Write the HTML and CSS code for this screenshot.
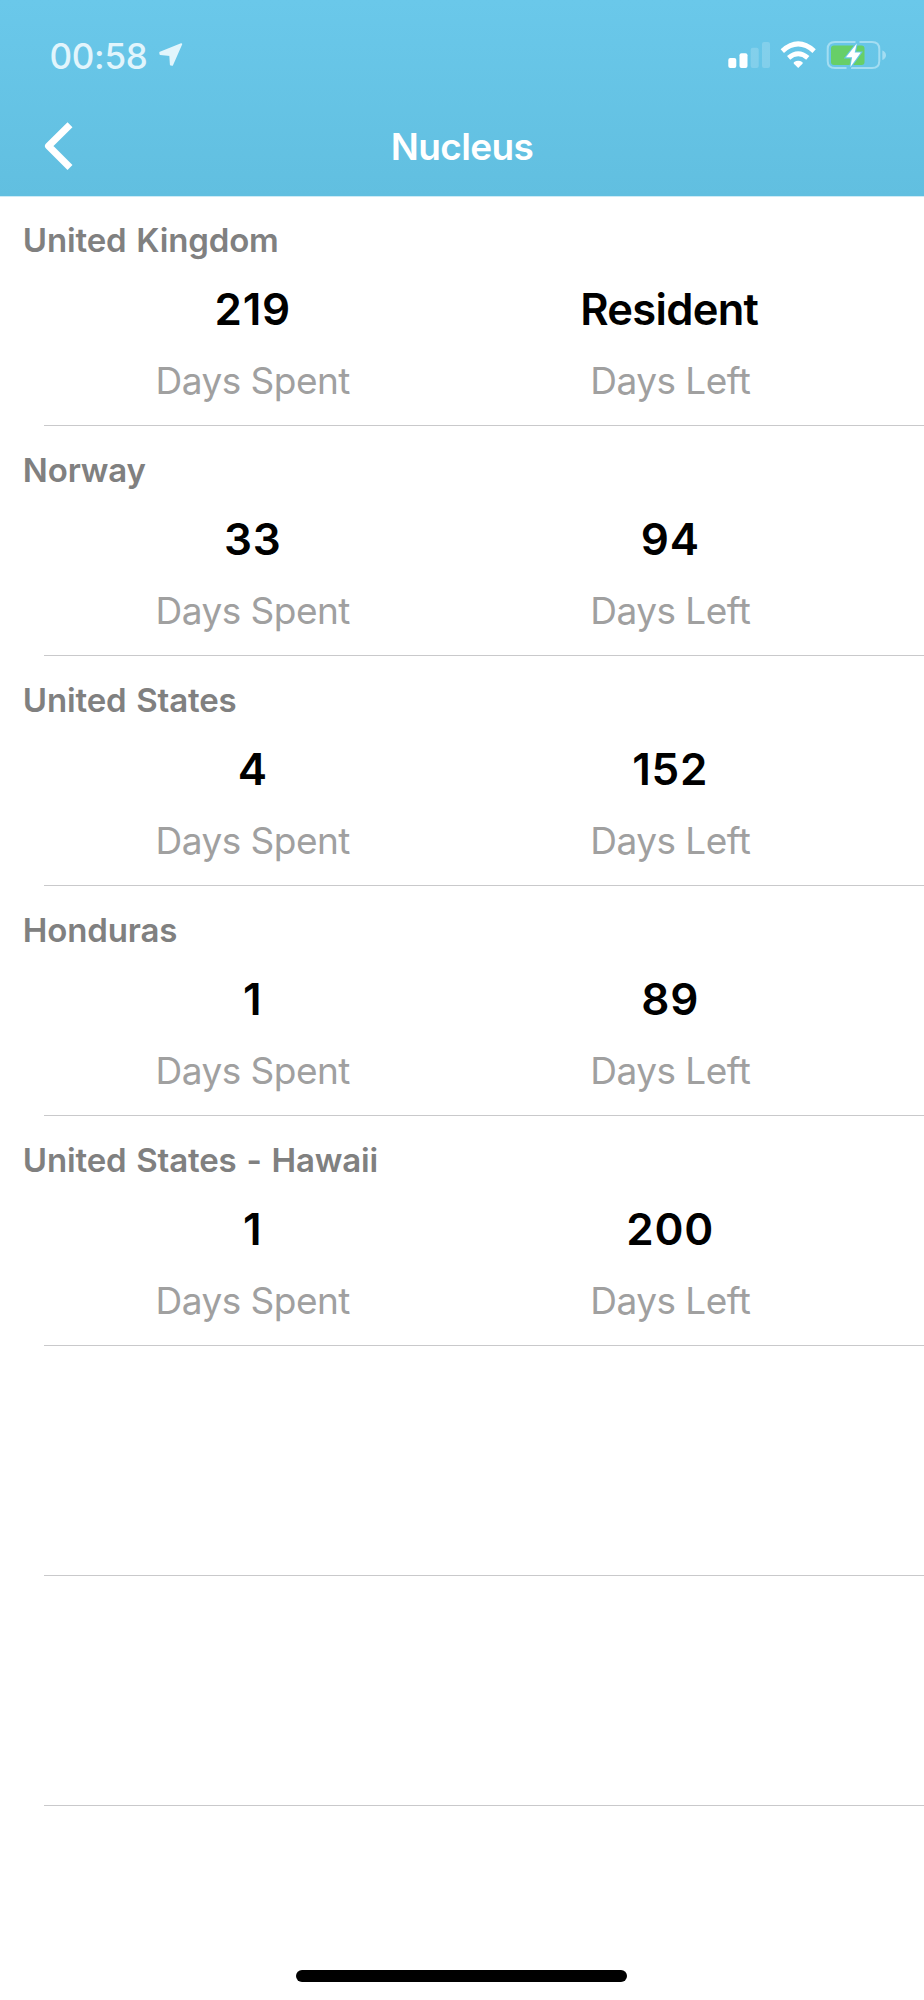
FILE: index.html
```
<!DOCTYPE html>
<html lang="en">
<head>
<meta charset="utf-8">
<title>Nucleus</title>
<link rel="stylesheet" href="styles.css">
</head>
<body>
<div class="screen">
  <header class="header">
    <div class="status">
      <div class="clock">
        <span class="time">00:58</span>
        <svg class="location" width="26" height="26" viewBox="0 0 26 26"><path d="M23.3 2.2 14.2 22.8 12.8 22.6 12.2 13.2 2.4 12.1 2.2 10.7Z" fill="#e2f5fc" stroke="#e2f5fc" stroke-width="1.8" stroke-linejoin="round"/></svg>
      </div>
      <svg class="indicators" width="162" height="32" viewBox="726 39 162 32">
        <g fill="#fff">
          <rect x="728.3" y="58" width="8" height="10" rx="2"/>
          <rect x="739.5" y="53.2" width="8" height="14.8" rx="2"/>
          <rect x="750.7" y="47.7" width="8" height="20.3" rx="2" opacity=".18"/>
          <rect x="762" y="42" width="8" height="26" rx="2" opacity=".18"/>
        </g>
        <path d="M798.2 68 793.9 63.7Q793.2 62.8 794.2 62.1 798.2 59.4 802.2 62.1 803.2 62.8 802.5 63.7Z" fill="#fff"/>
        <path d="M788.6 57.8Q798.2 49.6 807.8 57.8" fill="none" stroke="#fff" stroke-width="4.9"/>
        <path d="M782.3 51.1Q798.2 36.8 814.1 51.1" fill="none" stroke="#fff" stroke-width="5"/>
        <g fill="none" stroke="#a3ddf2" stroke-width="2">
          <path d="M855.5 42H835Q827.7 42 827.7 49V61Q827.7 68 835 68H846.5"/>
          <path d="M859.5 42H872Q879.3 42 879.3 49V61Q879.3 68 872 68H851"/>
        </g>
        <path d="M882.3 50.5Q886 52 886 55.2T882.3 60Z" fill="#a3ddf2"/>
        <rect x="831" y="45.5" width="33.5" height="19.5" rx="3" fill="#67cf68"/>
        <path d="M856.8 43.5 846 57.3H852.1L850.4 67 860.8 52.5H854.7Z" fill="#fff" stroke="#68c6e8" stroke-width="2.2" paint-order="stroke"/>
      </svg>
    </div>
    <nav class="nav">
      <svg class="back" width="40" height="56" viewBox="40.5 118 40 56"><path d="M70.5 124.7 49 146.1 70.5 167.5" fill="none" stroke="#fff" stroke-width="7" stroke-linejoin="round"/></svg>
      <h1 class="title">Nucleus</h1>
    </nav>
  </header>
  <main class="list">
    <section class="row">
      <h2 class="country">United Kingdom</h2>
      <div class="stats">
        <div class="stat"><div class="value">219</div><div class="label">Days Spent</div></div>
        <div class="stat"><div class="value word">Resident</div><div class="label">Days Left</div></div>
      </div>
    </section>
    <section class="row">
      <h2 class="country">Norway</h2>
      <div class="stats">
        <div class="stat"><div class="value">33</div><div class="label">Days Spent</div></div>
        <div class="stat"><div class="value">94</div><div class="label">Days Left</div></div>
      </div>
    </section>
    <section class="row">
      <h2 class="country">United States</h2>
      <div class="stats">
        <div class="stat"><div class="value">4</div><div class="label">Days Spent</div></div>
        <div class="stat"><div class="value">152</div><div class="label">Days Left</div></div>
      </div>
    </section>
    <section class="row">
      <h2 class="country">Honduras</h2>
      <div class="stats">
        <div class="stat"><div class="value">1</div><div class="label">Days Spent</div></div>
        <div class="stat"><div class="value">89</div><div class="label">Days Left</div></div>
      </div>
    </section>
    <section class="row">
      <h2 class="country">United States - Hawaii</h2>
      <div class="stats">
        <div class="stat"><div class="value">1</div><div class="label">Days Spent</div></div>
        <div class="stat"><div class="value">200</div><div class="label">Days Left</div></div>
      </div>
    </section>
    <section class="row"></section>
    <section class="row"></section>
  </main>
  <footer class="footer"><div class="home"></div></footer>
</div>
</body>
</html>
```
FILE: styles.css
```
* { box-sizing: border-box; margin: 0; }
body { background: #fff; font-family: Inter, "Liberation Sans", sans-serif; }
svg { display: block; flex: none; }
.screen { width: 924px; height: 2000px; display: flex; flex-direction: column; overflow: hidden; }
.header {
  height: 196px;
  background: linear-gradient(#6ac8ea, #61bfe0);
  display: flex;
  flex-direction: column;
  box-shadow: 0 1px 0 #cdebf6;
}
.status { height: 110px; padding: 0 36px 0 49.5px; display: flex; justify-content: space-between; align-items: center; }
.clock { display: flex; align-items: center; gap: 10.5px; }
.time { color: #e2f5fc; font-size: 35px; font-weight: 500; line-height: 44px; letter-spacing: -.3px; padding-top: 1px; }
.nav { height: 72px; padding: 0 40px; display: grid; grid-template-columns: 40px 1fr 40px; align-items: center; }
.title { color: #fff; font-size: 37px; font-weight: 600; line-height: 44px; letter-spacing: -.6px; text-align: center; padding-top: 2px; }
.row { height: 230px; padding-top: 24px; position: relative; }
.row::after { content: ""; position: absolute; left: 44px; right: 0; bottom: 0; height: 1px; background: #c9c9cb; }
.country { padding-left: 22.8px; color: #808080; font-size: 33px; font-weight: 600; line-height: 40px; letter-spacing: -.15px; word-spacing: 1.7px; }
.stats { display: grid; grid-template-columns: 1fr 1fr; padding: 23px 45px 0 44px; }
.stat { display: flex; flex-direction: column; align-items: center; gap: 24px; }
.value { color: #000; font-size: 44px; font-weight: 600; line-height: 52px; letter-spacing: .8px; }
.word { font-size: 43.5px; letter-spacing: -.7px; padding-right: 2px; }
.label { color: #a0a0a0; font-size: 37px; font-weight: 400; line-height: 44px; letter-spacing: -.53px; }
.footer { flex: 1; display: flex; justify-content: center; align-items: flex-end; padding: 0 1px 18px 0; }
.home { width: 331px; height: 12px; border-radius: 6px; background: #000; }
```
